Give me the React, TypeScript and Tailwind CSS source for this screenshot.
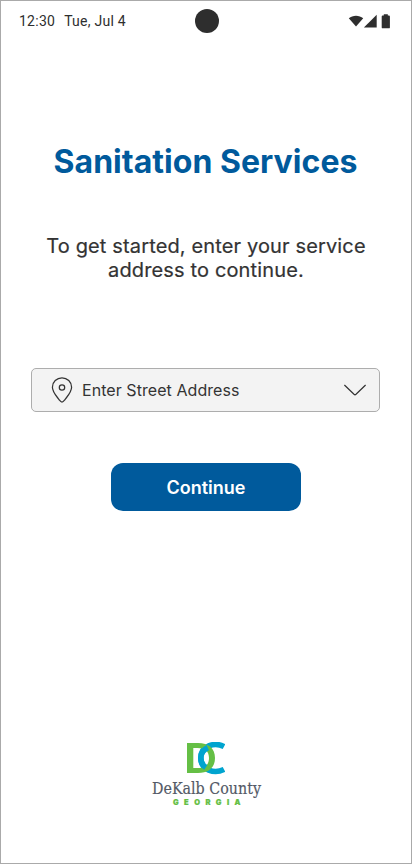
function StatusBar() {
  return (
    <header className="grid h-10 grid-cols-[176px_24px_1fr] items-center pl-[18px] pr-5 text-[#2e2e2e]">
      <div className="flex gap-[9px] whitespace-nowrap font-['Roboto',sans-serif] text-sm leading-5 tracking-[0.25px]">
        <span>12:30</span>
        <span>Tue, Jul 4</span>
      </div>
      <div className="size-6 rounded-full bg-[#2e2e2e]" />
      <div className="flex justify-end">
        <svg width="43" height="16" viewBox="0 0 43 16" fill="currentColor" aria-hidden="true">
          <path d="M0.8 5.2C4.7 1.8 11.3 1.8 15.2 5.2L8 13.4Z" />
          <path d="M28.7 1.7V14.5H15.9Z" />
          <path d="M35.8 1.2h4v1.4h1.2c.5 0 .9.4.9.9v10.9c0 .5-.4.9-.9.9h-6.4c-.5 0-.9-.4-.9-.9V3.5c0-.5.4-.9.9-.9h1.2z" />
        </svg>
      </div>
    </header>
  );
}

function AddressField() {
  return (
    <button className="mr-0.5 mt-[86px] flex h-11 w-[349px] items-center rounded-[5px] border border-[#adadad] bg-[#f3f3f3] pl-[19px] pr-3 text-[#333333]">
      <svg width="22" height="26" viewBox="0 0 22 26" fill="none" stroke="currentColor" strokeWidth="1.25" aria-hidden="true">
        <path d="M11 25.1C9.8 25.1 9.2 24.2 8.4 23.1C5.5 19.1 1.4 15 1.4 10.2A9.6 9.4 0 0 1 20.6 10.2C20.6 15 16.5 19.1 13.6 23.1C12.8 24.2 12.2 25.1 11 25.1Z" />
        <circle cx="11" cy="10.5" r="2.7" />
      </svg>
      <span className="ml-[9.5px] text-base leading-6 tracking-[0.06px]">Enter Street Address</span>
      <svg className="ml-auto" width="24" height="14" viewBox="0 0 24 14" fill="none" stroke="currentColor" strokeWidth="1.2" aria-hidden="true">
        <path d="M1.4 2L11 11.3Q12 12.2 13 11.3L22.6 2" />
      </svg>
    </button>
  );
}

function CountyLogo() {
  return (
    <footer className="mb-14 mt-auto flex flex-col items-center">
      <svg width="38" height="33" viewBox="0 0 38 33" fill="none" aria-hidden="true">
        <path d="M37 4.6C27.5-.3 13.8 3.8 13.8 16C13.8 28.2 27.5 32.3 37 27.4" stroke="#00a4cf" strokeWidth="5.6" />
        <path fillRule="evenodd" fill="#65bf45" d="M0 1H11C21.5 1 28 6.3 28 16C28 25.7 21.5 31 11 31H0ZM6.3 5.9V26.1H10.5C17.8 26.1 22 23.1 22 16C22 8.9 17.8 5.9 10.5 5.9Z" />
        <path d="M20.8 5.6C16.8 7.5 13.8 11 13.8 16C13.8 20.2 15.6 23.3 18.8 25.4" stroke="#00a4cf" strokeWidth="5.6" />
      </svg>
      <svg className="mt-0.5 overflow-visible" width="120" height="30" viewBox="0 0 120 30" aria-label="DeKalb County Georgia">
        <text x="6" y="17" textLength="109" lengthAdjust="spacingAndGlyphs" strokeWidth="0.15" className="fill-[#535966] stroke-[#535966] font-['DejaVu_Serif_Condensed','DejaVu_Serif',serif] text-[16px]">DeKalb County</text>
        <text x="27" y="28" textLength="67.5" strokeWidth="0.2" className="fill-[#65bf45] stroke-[#65bf45] font-['Inter',sans-serif] text-[7.5px] font-black">GEORGIA</text>
      </svg>
    </footer>
  );
}

export default function App() {
  return (
    <main className="flex h-[864px] w-[412px] flex-col items-center border border-[#aaaaaa] bg-white font-['Inter',sans-serif] text-[#333333]">
      <div className="w-full"><StatusBar /></div>
      <h1 className="mr-px mt-[101px] whitespace-nowrap text-[32px] font-bold leading-10 tracking-[0.03px] text-[#005a9c]">Sanitation Services</h1>
      <p className="mt-[52px] text-center text-xl leading-6 tracking-[0.14px] [-webkit-text-stroke:0.2px_#333333]">
        To get started, enter your service
        <br />
        address to continue.
      </p>
      <AddressField />
      <button className="mt-[51px] h-12 w-[190px] rounded-xl bg-[#005a9c] pt-0.5 text-lg font-semibold text-white">Continue</button>
      <CountyLogo />
    </main>
  );
}
